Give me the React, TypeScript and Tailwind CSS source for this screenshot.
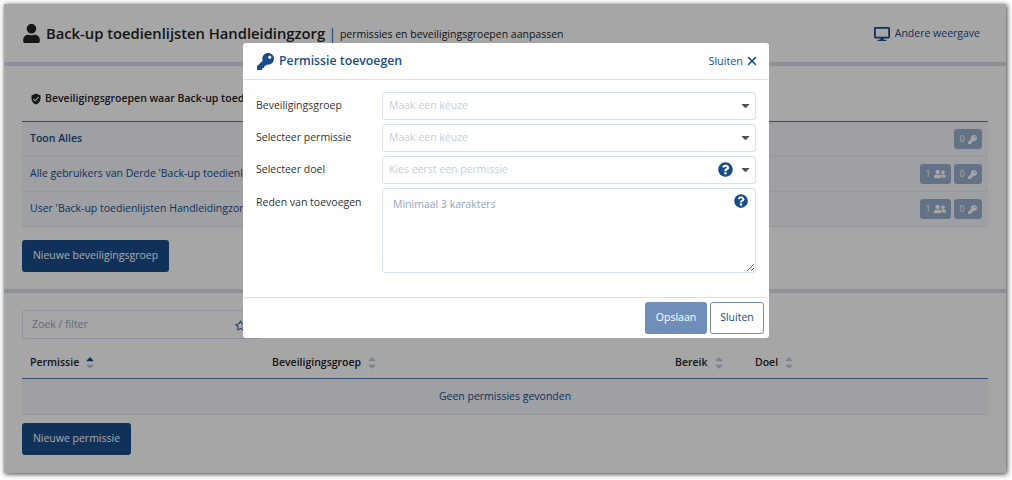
import { FaCaretDown, FaDesktop, FaKey, FaQuestionCircle, FaRegStar, FaSortDown, FaSortUp, FaUser, FaUserFriends } from "react-icons/fa";
import { MdVerifiedUser } from "react-icons/md";
import { X } from "lucide-react";

const Sort = ({ active = false }: { active?: boolean }) => (
  <span className="relative ml-[5px] inline-block h-3.5 w-2.5 text-[12px] text-[#bcc9dc]">
    <FaSortUp className={`absolute left-0 top-0 ${active ? "text-[#194c8a]" : ""}`} />
    <FaSortDown className="absolute left-0 top-[2px]" />
  </span>
);

const Badge = ({ count, users = false }: { count: number; users?: boolean }) => (
  <span className={`flex h-[20px] items-center justify-center gap-[3px] rounded-[3px] bg-[#9ab0d0] text-[9px] text-white ${users ? "w-[31px]" : "w-[28px]"}`}>
    {count}
    {users ? <FaUserFriends className="text-[12px]" /> : <FaKey className="text-[9px]" />}
  </span>
);

const Row = ({ label, bold = false, users = false }: { label: string; bold?: boolean; users?: boolean }) => (
  <div className="flex h-[35px] items-center justify-between border-b border-[#e6eaef] bg-[#f3f6fa] pl-2 pr-[6px]">
    <span className={`whitespace-nowrap text-[#194c8a] ${bold ? "font-semibold" : ""}`}>{label}</span>
    <div className="flex gap-[3px]">
      {users && <Badge count={1} users />}
      <Badge count={0} />
    </div>
  </div>
);

const Select = ({ text, help = false }: { text: string; help?: boolean }) => (
  <div className="flex h-[28px] flex-1 items-center justify-between rounded-[3px] border border-[#d8e2ee] pl-[6px] pr-[3px] text-[#bfcfe4]">
    <span>{text}</span>
    <span className="flex items-center gap-[6px] text-[#555]">
      {help && <FaQuestionCircle className="text-[15px] text-[#194c8a]" />}
      <FaCaretDown className="text-[13px]" />
    </span>
  </div>
);

const Field = ({ label, children }: { label: string; children: React.ReactNode }) => (
  <div className="flex items-center">
    <label className="w-[126px] text-[#333]">{label}</label>
    {children}
  </div>
);

export default function App() {
  return (
    <div className="h-[480px] w-[1012px] overflow-hidden bg-white pl-1 pt-1 font-['Open_Sans',sans-serif] text-[10.5px]">
      <div className="relative h-[469px] w-[1002px] bg-white text-[#222] shadow-[1px_1px_5px_rgba(0,0,0,0.8)]">
        <header className="flex h-[58px] items-center justify-between pl-[18px] pr-[26px] pt-[1px]">
          <div className="flex items-center">
            <FaUser className="mr-[5px] text-[19px]" />
            <h1 className="text-[14.75px] font-semibold">Back-up toedienlijsten Handleidingzorg</h1>
            <span className="ml-[3px] mr-[3px] text-[16px] text-[#2f6fb5]">|</span>
            <span className="mt-[3px]">permissies en beveiligingsgroepen aanpassen</span>
          </div>
          <div className="flex items-center gap-[5px] text-[#194c8a]">
            <FaDesktop className="text-[16px]" />
            <span>Andere weergave</span>
          </div>
        </header>

        <section className="h-[231px] border-y-4 border-[#d9dde3] px-[18px]">
          <div className="flex h-[56px] items-center border-b border-[#4a78b0] pl-2 pt-[10px] font-semibold">
            <MdVerifiedUser className="mr-[3px] text-[12px]" />
            Beveiligingsgroepen waar Back-up toedienlijsten
          </div>
          <Row label="Toon Alles" bold />
          <Row label="Alle gebruikers van Derde 'Back-up toedienlijsten'" users />
          <Row label="User 'Back-up toedienlijsten Handleidingzorg'" users />
          <button className="mt-[13px] h-[32px] w-[147px] rounded-[3px] bg-[#194c8a] text-white">Nieuwe beveiligingsgroep</button>
        </section>

        <section className="px-[18px] pt-[17px]">
          <div className="flex h-[29px] w-[240px] items-center justify-between rounded-[3px] border border-[#d8e2ee] pl-[9px] pr-[15px] pt-[1px] text-[#8fa5c2]">
            <span>Zoek / filter</span>
            <FaRegStar className="text-[11px] text-[#194c8a]" />
          </div>
          <div className="mt-[10px] flex h-[30px] items-center border-b border-[#4a78b0] pb-[2px] pl-2 font-semibold">
            <span className="flex w-[242px] items-center">Permissie<Sort active /></span>
            <span className="flex w-[403px] items-center">Beveiligingsgroep<Sort /></span>
            <span className="flex w-[80px] items-center">Bereik<Sort /></span>
            <span className="flex items-center">Doel<Sort /></span>
          </div>
          <div className="flex h-[36px] items-center justify-center border-b border-[#e6eaef] bg-[#f3f6fa] text-[#194c8a]">Geen permissies gevonden</div>
          <button className="mt-[8px] h-[32px] w-[109px] rounded-[3px] bg-[#194c8a] text-white">Nieuwe permissie</button>
        </section>

        <div className="absolute inset-0 bg-black/35" />

        <div className="absolute left-[239px] top-[39px] h-[295px] w-[526px] rounded-[3px] bg-white">
          <div className="flex h-[37px] items-center justify-between border-b border-[#d8e2ee] pl-[14px] pr-[10px]">
            <div className="flex items-center gap-[5px] text-[12.3px] font-semibold text-[#194c8a]">
              <FaKey className="text-[17px]" />
              Permissie toevoegen
            </div>
            <div className="flex items-center gap-[2px] text-[10.8px] text-[#194c8a]">
              Sluiten
              <X size={14} strokeWidth={2.6} />
            </div>
          </div>
          <div className="flex h-[217px] flex-col gap-[4.2px] pl-[13px] pr-[13px] pt-[11.6px]">
            <Field label="Beveiligingsgroep"><Select text="Maak een keuze" /></Field>
            <Field label="Selecteer permissie"><Select text="Maak een keuze" /></Field>
            <Field label="Selecteer doel"><Select text="Kies eerst een permissie" help /></Field>
            <div className="flex items-start">
              <label className="w-[126px] pt-[7px] text-[#333]">Reden van toevoegen</label>
              <div className="relative h-[85px] flex-1 resize-y overflow-hidden rounded-[3px] border border-[#d8e2ee] pl-[10px] pt-[8px] text-[#8fa5c2]">
                Minimaal 3 karakters
                <FaQuestionCircle className="absolute right-[7px] top-[5px] text-[14px] text-[#194c8a]" />
              </div>
            </div>
          </div>
          <div className="flex h-[41px] justify-end gap-[3px] border-t border-[#d8e2ee] pr-[5px] pt-[4px]">
            <button className="h-[32px] w-[62px] rounded-[3px] bg-[#6f8fb9] text-white">Opslaan</button>
            <button className="h-[32px] w-[54px] rounded-[3px] border border-[#6f8fb9] text-[#194c8a]">Sluiten</button>
          </div>
        </div>
      </div>
    </div>
  );
}
